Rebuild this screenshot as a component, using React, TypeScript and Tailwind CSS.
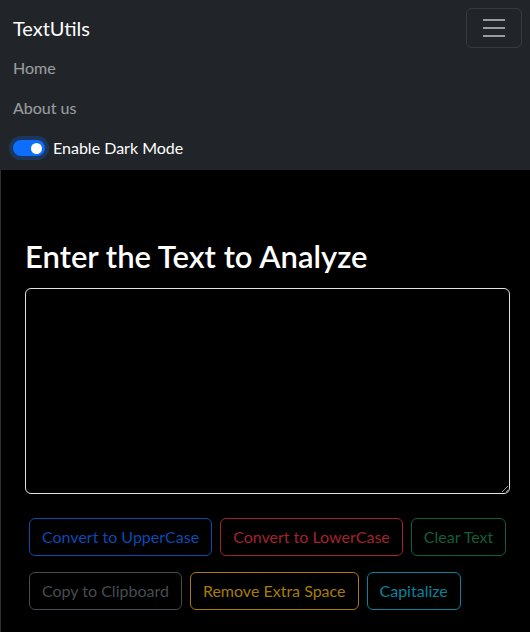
import { useState } from "react";

const buttons = [
  { label: "Convert to UpperCase", cls: "text-[#0a4ab3] border-[#0a4ab3]" },
  { label: "Convert to LowerCase", cls: "text-[#a3222f] border-[#a3222f]" },
  { label: "Clear Text", cls: "text-[#115e3a] border-[#115e3a]" },
  { label: "Copy to Clipboard", cls: "text-[#464c51] border-[#464c51]" },
  { label: "Remove Extra Space", cls: "text-[#a67d05] border-[#a67d05]" },
  { label: "Capitalize", cls: "text-[#08839c] border-[#08839c]" },
];

export default function App() {
  const [text, setText] = useState("");

  return (
    <div className="flex min-h-[632px] flex-col bg-black font-['Lato','Liberation_Sans',sans-serif] text-white">
      {/* Navbar */}
      <nav className="bg-[#212529] py-2 pr-2 pl-[13px]">
        <div className="flex items-center justify-between">
          <a href="#" className="py-[5px] text-xl leading-[30px] text-white">
            TextUtils
          </a>
          <button
            aria-label="Toggle navigation"
            className="flex h-10 w-14 items-center justify-center rounded-md border border-white/10"
          >
            <svg width="30" height="30" viewBox="0 0 30 30">
              <path
                d="M4 7h22M4 15h22M4 23h22"
                stroke="rgba(255,255,255,0.55)"
                strokeWidth={2}
              />
            </svg>
          </button>
        </div>

        <ul>
          <li>
            <a href="#" className="block py-2 text-base leading-6 text-white/55">
              Home
            </a>
          </li>
          <li>
            <a href="#" className="block py-2 text-base leading-6 text-white/55">
              About us
            </a>
          </li>
        </ul>

        <div className="mt-2 mb-[2px] flex h-6 items-center">
          <span className="relative flex h-4 w-8 items-center justify-end rounded-full bg-[#0d6efd] pr-[3px] shadow-[0_0_0_4px_rgba(13,110,253,0.25)]">
            <span className="h-[11px] w-[11px] rounded-full bg-white" />
          </span>
          <label className="ml-2 text-base leading-6 text-white">Enable Dark Mode</label>
        </div>
      </nav>

      {/* Body */}
      <main className="flex-1 border-l border-[#2b2f33] pt-[68px] pr-[20px] pl-[24px]">
        <h1 className="mb-[14px] text-[31px] font-semibold leading-9">
          Enter the Text to Analyze
        </h1>
        <div className="mb-4">
          <textarea
            value={text}
            onChange={(e) => setText(e.target.value)}
            className="block h-[206px] w-full resize-y rounded-md border border-[#dee2e6] bg-black px-3 py-1.5 text-white outline-none"
          />
        </div>

        <div className="-mr-3 flex flex-wrap">
          {buttons.map((b) => (
            <button
              key={b.label}
              className={`mx-1 my-2 rounded-md border px-3 py-1.5 text-base leading-6 ${b.cls}`}
            >
              {b.label}
            </button>
          ))}
        </div>
      </main>
    </div>
  );
}
